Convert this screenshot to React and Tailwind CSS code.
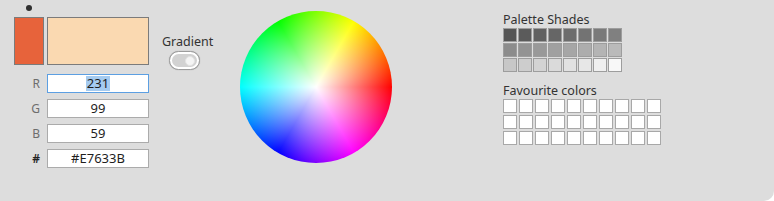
import React from 'react'

const SHADES = [
  ['#555555', '#5b5b5b', '#616161', '#666666', '#6d6d6d', '#737373', '#7a7a7a', '#808080'],
  ['#8c8c8c', '#939393', '#999999', '#a0a0a0', '#a6a6a6', '#adadad', '#b4b4b4', '#bababa'],
  ['#c7c7c7', '#cdcdcd', '#d3d3d3', '#dadada', '#e1e1e1', '#e7e7e7', '#efefef', '#f8f8f8'],
]

const FIELDS = [
  { label: 'R', value: '231', active: true },
  { label: 'G', value: '99' },
  { label: 'B', value: '59' },
  { label: '#', value: '#E7633B', strong: true },
]

const Field = ({ label, value, active, strong }) => (
  <div className="flex items-center">
    <span
      className={`w-[33px] pr-[7px] text-right text-[12px] leading-[19px] ${strong ? 'text-[#222] font-semibold' : 'text-[#6d6d6d]'}`}
    >
      {label}
    </span>
    <div
      className={`flex h-[19px] w-[102px] items-center justify-center bg-white text-[13px] text-[#1e1e1e] border ${active ? 'border-[#5c9fe2]' : 'border-[#ababab]'}`}
    >
      {active ? <span className="bg-[#a5cbf0] px-[1px] leading-[15px]">{value}</span> : value}
    </div>
  </div>
)

export default function App() {
  return (
    <div className="h-[201px] w-[774px] bg-white font-['Noto_Sans',sans-serif]">
      <div className="flex h-full w-full items-start rounded-br-[10px] bg-[#dddddd] text-[#2b2b2b]">
        {/* current colour + rgb fields */}
        <div className="flex w-[149px] flex-col">
          <div className="ml-[26px] mt-[5px] h-[6px] w-[6px] rounded-full bg-[#2f2f2f]" />
          <div className="ml-[14px] mt-[6px] flex gap-[3px]">
            <div className="h-[48px] w-[30px] border border-[#7b7b7b] bg-[#e7633b]" />
            <div className="h-[48px] w-[102px] border border-[#7b7b7b] bg-[#fad9b1]" />
          </div>
          <div className="ml-[14px] mt-[9px] flex flex-col gap-[6px]">
            {FIELDS.map((f) => (
              <Field key={f.label} {...f} />
            ))}
          </div>
        </div>

        {/* gradient switch */}
        <div className="ml-[13px] mt-[34px] flex w-[78px] flex-col items-start">
          <span className="text-[12.5px] leading-[16px] text-[#333]">Gradient</span>
          <div className="ml-[7px] mt-[1px] flex h-[19px] w-[31px] items-center rounded-full border border-[#9c9c9c] bg-white p-[2px] shadow-[0_0_1px_rgba(0,0,0,0.3)]">
            <div className="flex h-full w-full items-center justify-end rounded-full bg-[#d2d2d2] pr-[2px]">
              <div className="h-[10px] w-[10px] rounded-full border border-[#e3e3e3] bg-[#f4f4f4]" />
            </div>
          </div>
        </div>

        {/* colour wheel */}
        <div className="mt-[11px] h-[152px] w-[152px] shrink-0 rounded-full [background-image:radial-gradient(closest-side,#ffffff,rgba(255,255,255,0)),conic-gradient(from_90deg,#ff0000,#ff00ff,#0000ff,#00ffff,#00ff00,#ffff00,#ff0000)]" />

        {/* palettes */}
        <div className="ml-[111px] mt-[12px] flex flex-col">
          <span className="text-[12.5px] leading-[15px] text-[#333]">Palette Shades</span>
          <div className="mt-[1px] flex flex-col gap-[1px]">
            {SHADES.map((row, r) => (
              <div key={r} className="flex gap-[1px]">
                {row.map((c) => (
                  <div key={c} className="h-[14px] w-[14px] border border-[#9d9d9d]" style={{ backgroundColor: c }} />
                ))}
              </div>
            ))}
          </div>
          <span className="mt-[11px] text-[12.5px] leading-[15px] text-[#333]">Favourite colors</span>
          <div className="mt-[1px] flex flex-col gap-[2px]">
            {[0, 1, 2].map((r) => (
              <div key={r} className="flex gap-[2px]">
                {Array.from({ length: 10 }).map((_, i) => (
                  <div key={i} className="h-[14px] w-[14px] border border-[#a8a8a8] bg-white" />
                ))}
              </div>
            ))}
          </div>
        </div>
      </div>
    </div>
  )
}
